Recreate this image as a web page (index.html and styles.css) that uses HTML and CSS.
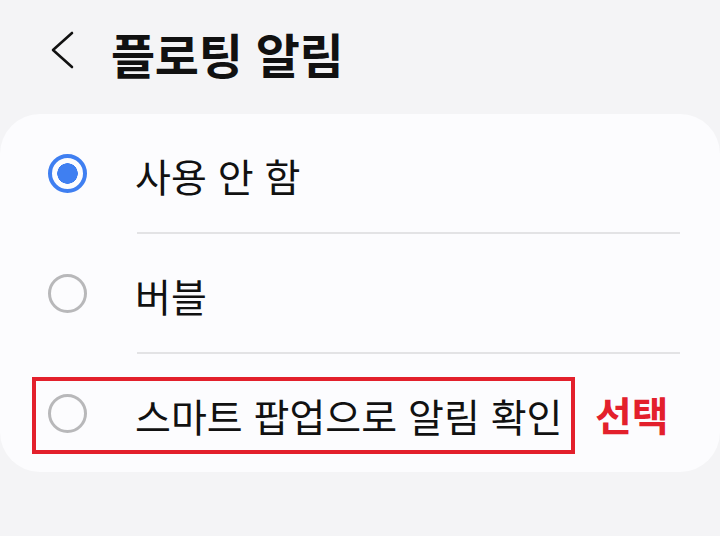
FILE: index.html
```html
<!DOCTYPE html>
<html lang="ko">
<head>
<meta charset="utf-8">
<link rel="stylesheet" href="styles.css">
</head>
<body>
<header class="topbar">
  <svg class="back" width="40" height="44" viewBox="0 0 40 44">
    <polyline points="30,4 11,21 30,38" fill="none" stroke="#111" stroke-width="2.6" stroke-linecap="round" stroke-linejoin="round"/>
  </svg>
  <h1 class="title">플로팅 알림</h1>
</header>
<main class="card">
  <div class="row">
    <span class="radio radio-on"></span>
    <span class="label">사용 안 함</span>
  </div>
  <div class="divider"></div>
  <div class="row">
    <span class="radio"></span>
    <span class="label">버블</span>
  </div>
  <div class="divider"></div>
  <div class="row row-marked">
    <span class="radio"></span>
    <span class="label">스마트 팝업으로 알림 확인</span>
    <span class="highlight"></span>
    <span class="note">선택</span>
  </div>
</main>
</body>
</html>
```
FILE: styles.css
```css
html, body {
  margin: 0;
  padding: 0;
}
body {
  width: 720px;
  height: 536px;
  background: #f4f4f6;
  font-family: "Noto Sans CJK KR", "Noto Sans", sans-serif;
  color: #111;
  overflow: hidden;
}
.topbar {
  height: 114px;
  display: flex;
  align-items: center;
  padding-left: 42px;
  box-sizing: border-box;
  padding-bottom: 12px;
}
.back {
  flex: none;
  display: block;
}
.title {
  margin: 0 0 0 29px;
  font-size: 48px;
  font-weight: 700;
  line-height: 1;
  letter-spacing: -0.3px;
  position: relative;
  top: 2px;
}
.card {
  background: #fcfcfe;
  border-radius: 40px;
  display: flex;
  flex-direction: column;
}
.row {
  height: 118px;
  display: flex;
  align-items: center;
  position: relative;
}
.radio {
  flex: none;
  width: 39px;
  height: 39px;
  box-sizing: border-box;
  border-radius: 50%;
  border: 3px solid #b8b8ba;
  margin-left: 48px;
  margin-right: 48px;
}
.radio-on {
  border: 4px solid #3f7ff1;
  background: radial-gradient(circle, #3f7ff1 0 10px, transparent 10.5px);
}
.label {
  font-size: 39px;
  line-height: 1;
  color: #111;
  letter-spacing: 0;
  position: relative;
  top: 2px;
}
.divider {
  height: 2px;
  background: #e3e3e5;
  margin: 0 40px 0 137px;
}
.highlight {
  position: absolute;
  left: 32px;
  top: 23px;
  width: 543px;
  height: 77px;
  box-sizing: border-box;
  border: 4px solid #e3202c;
}
.note {
  position: absolute;
  left: 595px;
  top: 40px;
  font-size: 40px;
  font-weight: 700;
  line-height: 1;
  color: #e3202c;
}
```
